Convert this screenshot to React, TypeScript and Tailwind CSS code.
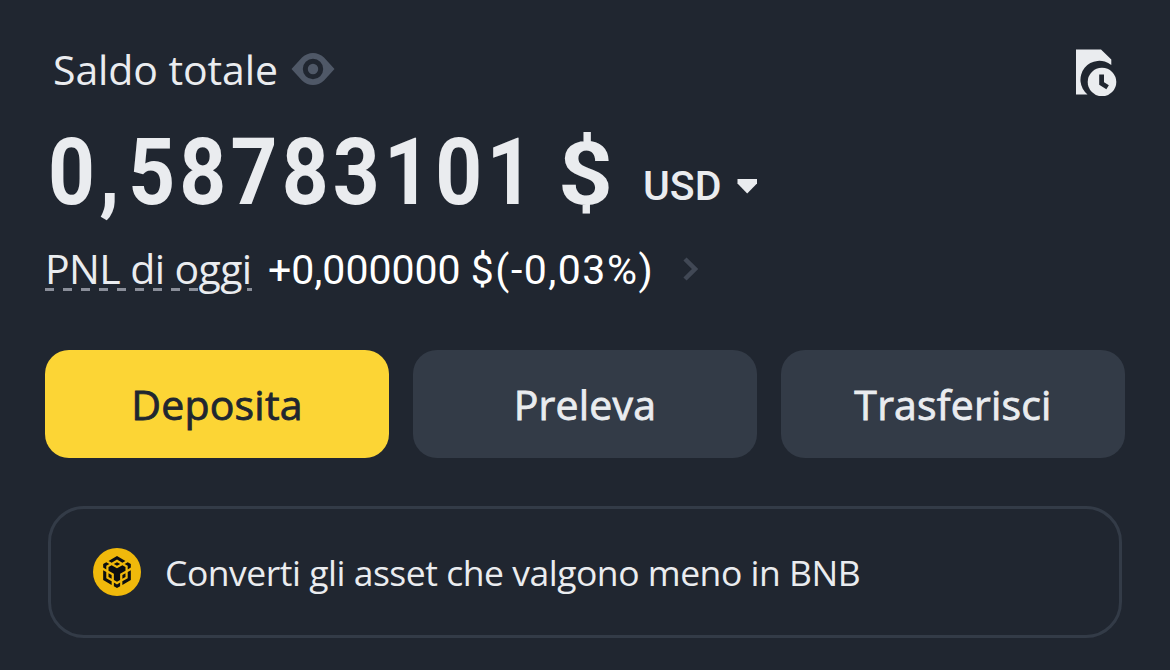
import React from 'react';

type Action = {
  id: string;
  label: string;
  className: string;
};

const actions: Action[] = [
  { id: 'deposit', label: 'Deposita', className: 'bg-[#fcd535] text-[#202630]' },
  { id: 'withdraw', label: 'Preleva', className: 'bg-[#333b47] text-[#eaecef]' },
  { id: 'transfer', label: 'Trasferisci', className: 'bg-[#333b47] text-[#eaecef]' }
];

const EyeIcon: React.FC = () => (
  <svg width="44" height="34" viewBox="0 0 44 34" className="text-[#4f5867]">
    <path
      fill="currentColor"
      fillRule="evenodd"
      d="M0.5 17 L11 5.5 Q16 1 22 1 Q28 1 33 5.5 L43.5 17 L33 28.5 Q28 33 22 33 Q16 33 11 28.5 Z M22 6.8 a10.2 10.2 0 1 0 0 20.4 a10.2 10.2 0 1 0 0 -20.4 Z M22 11.8 a5.2 5.2 0 1 1 0 10.4 a5.2 5.2 0 1 1 0 -10.4 Z"
    />
  </svg>
);

const HistoryIcon: React.FC = () => (
  <svg width="42" height="48" viewBox="0 0 42 48">
    <path d="M1 1.5 H26 L36.3 11.5 V17 A18.3 18.3 0 0 0 12.5 46.5 H1 Z" fill="#eaecef" />
    <circle cx="27" cy="34" r="18.2" fill="#202630" />
    <circle cx="27" cy="34" r="14.3" fill="#eaecef" />
    <path d="M26.6 26.5 V35.5 L32.6 39.2" fill="none" stroke="#202630" strokeWidth="4.8" />
  </svg>
);

const BnbIcon: React.FC = () => (
  <span className="flex size-12 shrink-0 items-center justify-center rounded-full bg-[#f0b90b] text-[#0b0e11]">
    <svg width="32" height="32" viewBox="0 0 24 24" fill="currentColor">
      <path d="M5.631 3.676 12.001 0l6.367 3.676-2.34 1.358L12 2.716 7.972 5.034l-2.34-1.358Zm12.737 4.636-2.34-1.358L12 9.272 7.972 6.954l-2.34 1.358v2.716l4.026 2.318v4.636L12 19.341l2.341-1.359v-4.636l4.027-2.318V8.312Zm0 7.352v-2.716l-2.34 1.358v2.716l2.34-1.358Zm1.663.96-4.027 2.318v2.717l6.368-3.677V10.63l-2.34 1.358v4.636Zm-2.34-10.63 2.34 1.358v2.716l2.341-1.358V5.994l-2.34-1.358-2.342 1.358ZM9.657 19.926v2.716L12 24l2.341-1.358v-2.716l-2.34 1.358-2.342-1.358Zm-4.027-4.262 2.341 1.358v-2.716L5.631 12.948v2.716Zm4.027-9.67L12 7.352l2.341-1.358L12 4.636 9.658 5.994Zm-5.69 1.358 2.341-1.358-2.34-1.358-2.342 1.358v2.716l2.341 1.358V7.352Zm0 4.636L1.627 10.63v7.353l6.368 3.677v-2.717l-4.027-2.318v-4.636Z" />
    </svg>
  </span>
);

const App: React.FC = () => {
  return (
    <div className="flex h-[670px] w-[1170px] flex-col overflow-hidden bg-[#202630] px-[45px] pt-[44px] font-['Open_Sans','Noto_Sans',sans-serif] text-[#eaecef]">
      <div className="flex h-[54px] items-center justify-between pl-[8px] pr-[8px]">
        <div className="flex items-center">
          <span className="-mt-[5px] w-[238px] whitespace-nowrap text-[41px] leading-[54px] tracking-[-0.1px]">Saldo totale</span>
          <div className="-mt-1"><EyeIcon /></div>
        </div>
        <div className="mt-0.5"><HistoryIcon /></div>
      </div>

      {/* Balance */}
      <div className="mt-[19px] flex h-[112px] items-baseline whitespace-nowrap pl-[3px] font-['Roboto',sans-serif]">
        <div className="w-[510px] text-[93px] font-bold leading-[112px]">
          <span className="inline-block origin-left scale-x-[0.88] tracking-[4.8px]">
            0<span className="tracking-[10px]">,</span>58783101
          </span>
        </div>
        <span className="w-[85px] text-[88px] font-bold leading-[112px]">
          <span className="inline-block origin-left scale-x-[1.09]">$</span>
        </span>
        <span className="relative -top-1 w-[94px] text-[41px] font-medium">USD</span>
        <svg width="20" height="15" viewBox="0 0 20 15" className="relative -top-2.5">
          <path d="M0.5 0 H20 V4.5 L10.2 14.5 L0.5 4.5 Z" fill="#eaecef" />
        </svg>
      </div>

      {/* Today's PNL */}
      <div className="mt-[11px] flex h-[58px] items-center whitespace-nowrap">
        <div className="relative -mt-0.5 w-[223px]">
          <div className="absolute left-0 top-[47px] h-[3px] w-[153px] bg-[repeating-linear-gradient(90deg,#8a8e99_0_9px,transparent_9px_18px)]" />
          <div className="absolute left-[202px] top-[47px] h-[3px] w-[5px] bg-[#8a8e99]" />
          <span className="relative text-[41px] leading-[54px] tracking-[-0.6px]">PNL di oggi</span>
        </div>
        <span className="mt-0.5 w-[415px] font-['Roboto',sans-serif] text-[41px] leading-[54px] text-white">
          +0,000000 <span className="tracking-[1.5px]">$(-0,03%)</span>
        </span>
        <svg width="15" height="24" viewBox="0 0 15 24">
          <path d="M2 2 L12 12 L2 22" fill="none" stroke="#414855" strokeWidth="4.5" />
        </svg>
      </div>

      <div className="mt-[52px] grid grid-cols-3 gap-6">
        {actions.map((action) => (
          <button
            key={action.id}
            className={`flex h-[108px] items-center justify-center rounded-3xl pt-0.5 text-[41px] tracking-[0.2px] [-webkit-text-stroke:0.8px_currentColor] ${action.className}`}
          >
            {action.label}
          </button>
        ))}
      </div>

      <div className="mx-[3px] mt-12 flex h-[132px] items-center gap-6 rounded-[36px] border-[3px] border-[#333b47] pl-[42px]">
        <BnbIcon />
        <span className="mt-0.5 whitespace-nowrap text-[35.5px] tracking-[-0.48px]">Converti gli asset che valgono meno in BNB</span>
      </div>
    </div>
  );
};

export default App;
